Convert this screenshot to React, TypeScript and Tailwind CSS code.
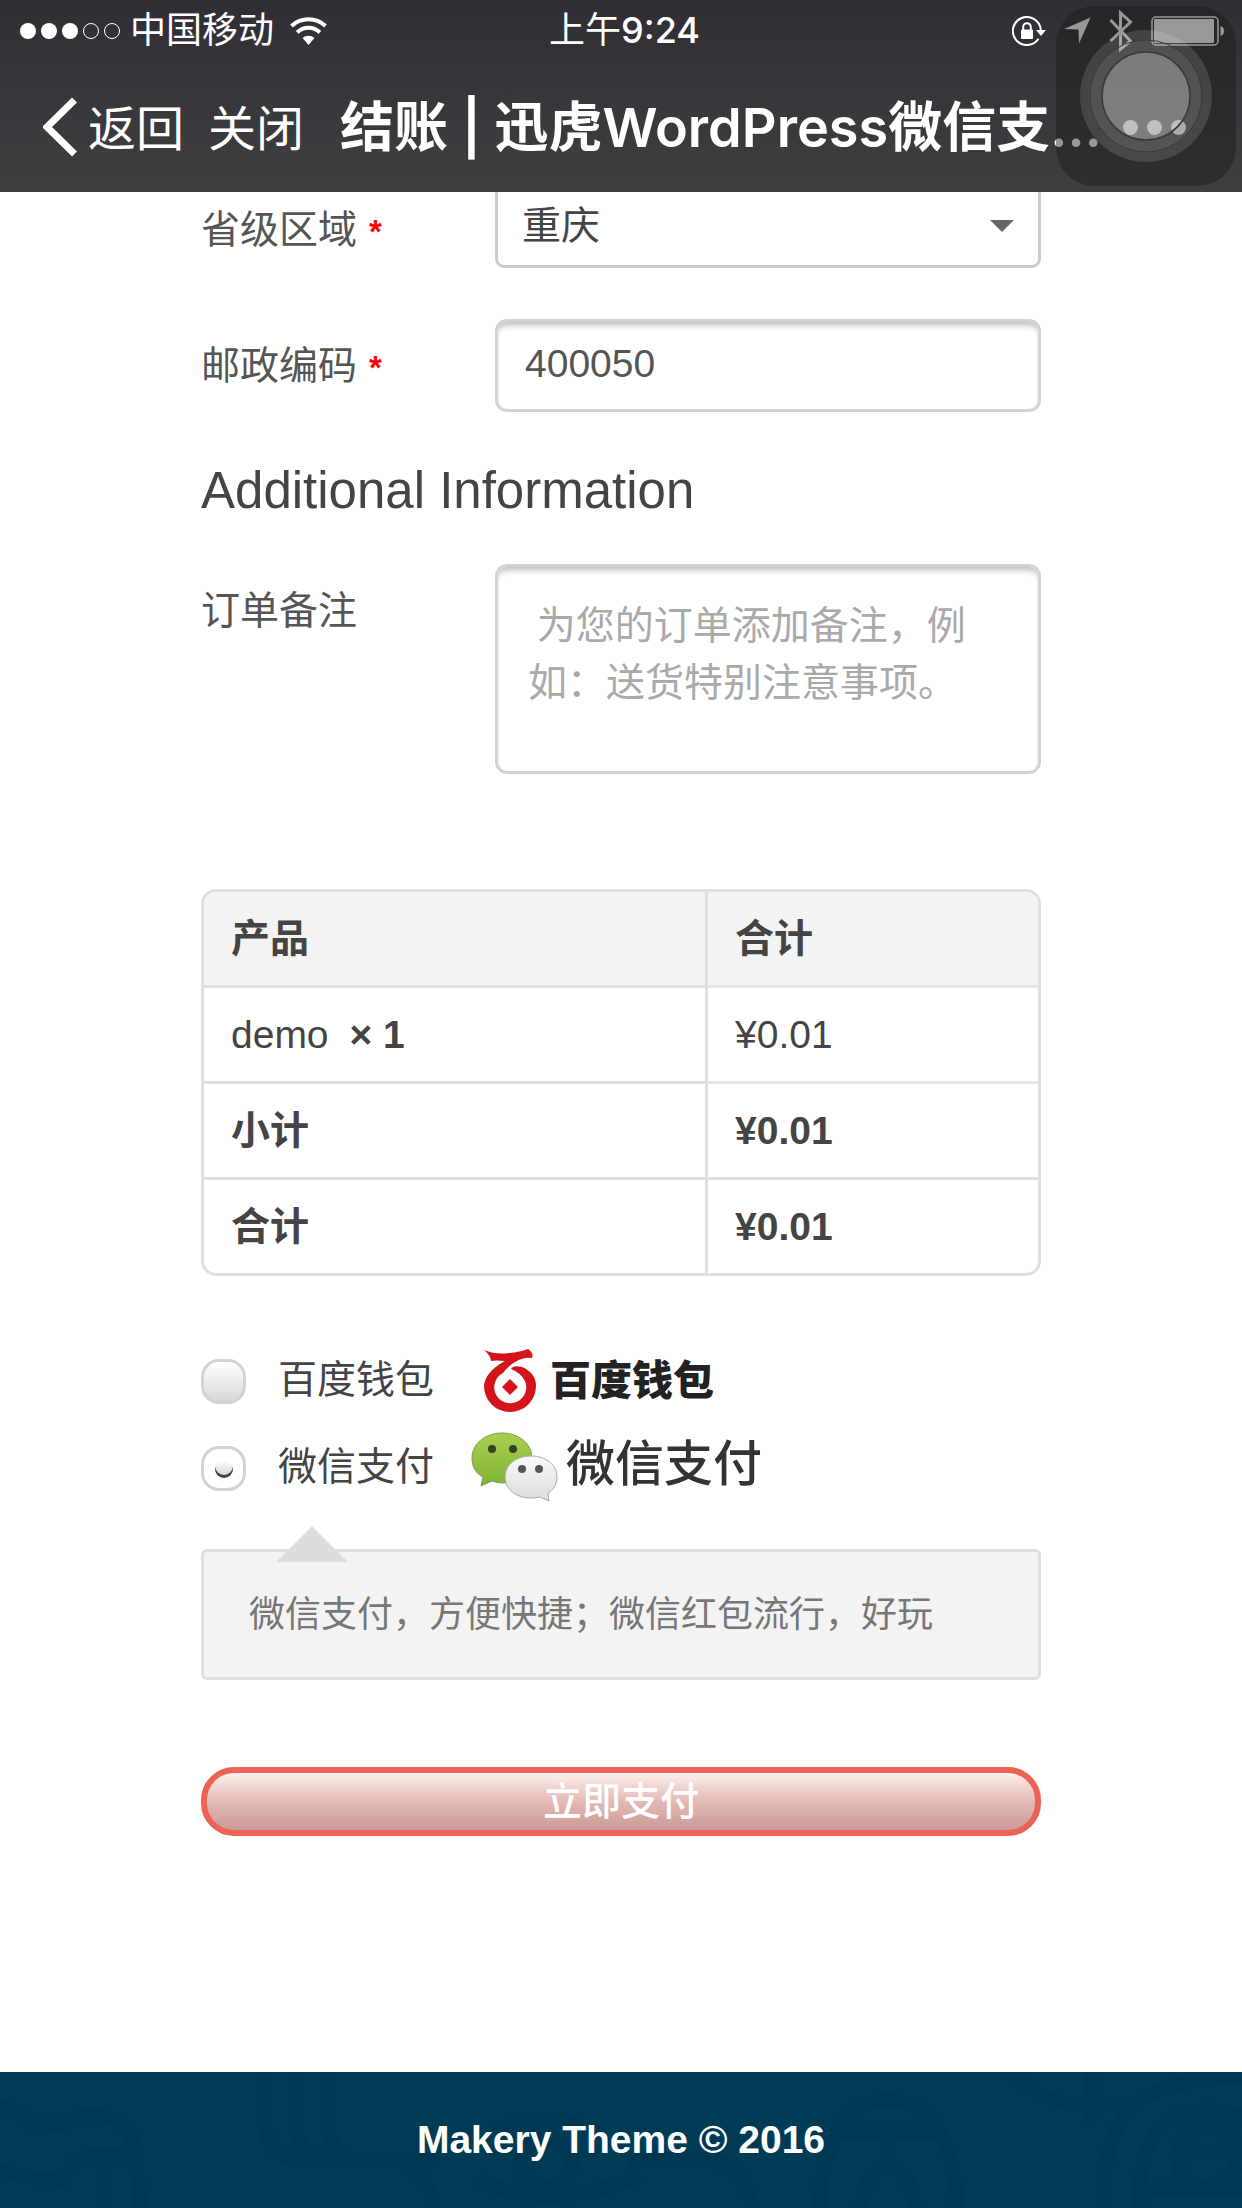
import React from "react";

function SignalDots() {
  return (
    <svg className="h-4 w-[102px]" viewBox="0 0 102 16" aria-label="signal">
      <g fill="#fff">
        <circle cx="8" cy="8" r="8" />
        <circle cx="29" cy="8" r="8" />
        <circle cx="50" cy="8" r="8" />
      </g>
      <g fill="none" stroke="#fff" strokeWidth="1">
        <circle cx="71" cy="8" r="7.5" />
        <circle cx="92" cy="8" r="7.5" />
      </g>
    </svg>
  );
}

function WifiIcon() {
  return (
    <svg className="h-7 w-[37px]" viewBox="0 0 37 28" aria-label="wifi">
      <g fill="none" stroke="#fff" strokeWidth="4">
        <path d="M1.500 9 A25 25 0 0 1 35.500 9" />
        <path d="M7.200 15.500 A16 16 0 0 1 29.800 15.500" />
      </g>
      <path d="M18.500 28 L12.500 21 A9 9 0 0 1 24.500 21 Z" fill="#fff" />
    </svg>
  );
}

function RotationLockIcon() {
  return (
    <svg className="h-[30px] w-[34px]" viewBox="0 0 34 30" aria-label="rotation lock">
      <path d="M28.800 14 A14 14 0 1 0 26.500 22.800" fill="none" stroke="#fff" strokeWidth="2" />
      <path d="M24 14 H34 L29 20 Z" fill="#fff" />
      <rect x="9" y="13.500" width="12" height="9.500" rx="1" fill="#fff" />
      <path d="M11.200 14 V11 A3.800 3.800 0 0 1 18.800 11 V14" fill="none" stroke="#fff" strokeWidth="2" />
    </svg>
  );
}

function LocationIcon() {
  return (
    <svg className="h-[27px] w-[27px]" viewBox="0 0 27 27" aria-label="location">
      <path d="M26.500 0.500 L15 26.500 L14.500 12.500 L0 12 Z" fill="#fff" />
    </svg>
  );
}

function BluetoothIcon() {
  return (
    <svg className="h-[42px] w-6" viewBox="0 0 24 42" aria-label="bluetooth">
      <path d="M1.500 10 L21.500 31 L11.500 39 V3 L21.500 12 L1.500 31" fill="none" stroke="#fff" strokeWidth="3" />
    </svg>
  );
}

function BatteryIcon() {
  return (
    <svg className="h-[30px] w-[74px]" viewBox="0 0 74 30" aria-label="battery">
      <rect x="1" y="1" width="66" height="28" rx="4" fill="none" stroke="#fff" strokeWidth="1.500" />
      <rect x="3" y="3" width="60" height="24" rx="1" fill="#fff" />
      <path d="M69.500 10 Q73 11 73 15 Q73 19 69.500 20 Z" fill="#fff" />
    </svg>
  );
}

function AssistiveTouch() {
  return (
    <div
      className="absolute top-[6px] right-[6px] flex size-[180px] items-center justify-center rounded-[38px] bg-[#1a1a1b]/45"
      aria-label="assistive touch"
    >
      <svg className="size-[132px]" viewBox="0 0 132 132">
        <circle cx="66" cy="66" r="66" fill="#fff" fillOpacity="0.13" />
        <circle cx="66" cy="66" r="56" fill="#fff" fillOpacity="0.07" stroke="#39393a" strokeWidth="1" />
        <circle cx="66" cy="66" r="44" fill="#fff" fillOpacity="0.25" stroke="#39393a" strokeWidth="1.500" />
      </svg>
    </div>
  );
}

function BaiduMark() {
  return (
    <svg className="h-[66px] w-14 shrink-0" viewBox="0 0 56 66" aria-label="百度钱包">
      <path
        d="M2 1 Q14 6 27 4 Q38 3 46 0 Q52 4 50 9 Q42 8 33 13 Q26 17 21 24 A16 16 0 1 0 43 32 Q39 24 29 20 Q31 16 40 18 Q54 24 54 37 A26 26 0 0 1 2 37 Q3 23 23 12 Q14 11 9 12 Q9 7 2 1 Z"
        fill="#d4141a"
      />
      <path d="M28 30 L36 38 L28 46 L20 38 Z" fill="#d4141a" />
    </svg>
  );
}

function WechatMark() {
  return (
    <svg className="h-[72px] w-[90px] shrink-0" viewBox="0 0 90 72" aria-label="微信">
      <defs>
        <linearGradient id="bubble-green" x1="0" y1="0" x2="0" y2="1">
          <stop offset="0" stopColor="#a9cf52" />
          <stop offset="1" stopColor="#80b236" />
        </linearGradient>
        <linearGradient id="bubble-gray" x1="0" y1="0" x2="0" y2="1">
          <stop offset="0" stopColor="#fafafa" />
          <stop offset="1" stopColor="#d9dbdd" />
        </linearGradient>
      </defs>
      <path
        d="M32 2 C49 2 62 13 62 27 C62 42 49 52 32 52 Q27 52 22 50 L11 55 L13 46 C5 42 2 35 2 27 C2 13 15 2 32 2 Z"
        fill="url(#bubble-green)"
        stroke="#7f9f50"
        strokeWidth="1"
      />
      <path
        d="M61 25 C76 25 87 34 87 46 C87 54 83 59 78 62 L79 70 L70 66 Q66 67 61 67 C46 67 35 58 35 46 C35 34 46 25 61 25 Z"
        fill="url(#bubble-gray)"
        stroke="#a8a8a8"
        strokeWidth="1"
      />
      <g fill="#33431f">
        <circle cx="22" cy="18" r="4" />
        <circle cx="43" cy="18" r="4" />
      </g>
      <g fill="#555">
        <circle cx="52" cy="38" r="4" />
        <circle cx="69" cy="38" r="4" />
      </g>
    </svg>
  );
}

function FooterPattern() {
  return (
    <svg className="absolute inset-0 h-full w-full" viewBox="0 0 1242 136" preserveAspectRatio="xMidYMid slice" aria-hidden="true">
      <g fill="none" stroke="#00344f" strokeWidth="14" opacity="0.5">
        <path d="M0 34 Q20 38 36 55 L65 52 Q85 40 99 42 Q130 48 136 80 L140 136" />
        <path d="M0 98 L32 106 L63 108 Q75 82 100 82 H132" />
        <path d="M105 92 V136" />
        <path d="M265 0 V55 Q270 86 300 88 H440" />
        <path d="M296 0 V55 Q298 75 312 84" />
        <path d="M328 0 V55 Q330 75 344 84" />
        <path d="M408 96 Q430 108 434 136" />
        <path d="M495 58 Q546 34 600 62" />
        <ellipse cx="546" cy="91" rx="26" ry="24" />
        <path d="M478 108 Q546 142 640 104" />
        <path d="M629 91 Q680 82 724 92 Q748 104 752 136" />
        <path d="M819 136 Q826 28 888 28 Q950 28 958 136" />
        <path d="M843 61 H938 M888 61 V98" />
        <path d="M860 136 Q868 94 888 94 Q908 94 916 136" />
        <path d="M1009 0 Q1040 28 1068 31 H1136 Q1180 2 1242 6" />
        <path d="M1090 0 V50" />
        <path d="M1104 136 Q1100 62 1136 32" />
        <path d="M1138 136 Q1138 38 1207 38 Q1242 38 1260 60" />
        <circle cx="1207" cy="85" r="30" />
        <path d="M1177 80 H1242 M1145 118 H1242" />
      </g>
    </svg>
  );
}

function Header() {
  return (
    <header className="relative z-10 h-48 bg-linear-to-b from-[#302e34] to-[#3f3f41] text-white">
      <div className="grid h-[61px] grid-cols-[1fr_auto_1fr] items-center pr-[17px] pl-5 font-['Inter','Noto_Sans_CJK_SC',sans-serif] text-[36px] leading-[61px]">
        <div className="flex items-center">
          <SignalDots />
          <span className="mr-4 ml-2">中国移动</span>
          <WifiIcon />
        </div>
        <div className="pl-1">
          上午<span className="font-medium">9:24</span>
        </div>
        <div className="flex items-center justify-end gap-[18px]">
          <RotationLockIcon />
          <LocationIcon />
          <BluetoothIcon />
          <BatteryIcon />
        </div>
      </div>
      <nav className="flex h-[132px] items-center pr-14 pl-[43px] font-['Inter','Noto_Sans_CJK_SC',sans-serif]">
        <button type="button" className="flex items-center gap-[10px] text-[48px] leading-[72px]">
          <svg className="h-[60px] w-[35px]" viewBox="0 0 35 60" aria-hidden="true">
            <path d="M31.500 3 L4 30 L31.500 57" fill="none" stroke="#fff" strokeWidth="7" />
          </svg>
          <span className="pt-[3px]">返回</span>
        </button>
        <button type="button" className="ml-6 pt-[3px] text-[48px] leading-[72px]">
          关闭
        </button>
        <h1 className="ml-9 min-w-0 flex-1 pt-[2px] text-[54px] leading-[72px] font-semibold whitespace-nowrap">
          结账 | 迅虎WordPress微信支…
        </h1>
        <button type="button" aria-label="更多" className="flex gap-[9px]">
          <span className="size-[15px] rounded-full bg-white" />
          <span className="size-[15px] rounded-full bg-white" />
          <span className="size-[15px] rounded-full bg-white" />
        </button>
      </nav>
      <AssistiveTouch />
    </header>
  );
}

function Required() {
  return <span className="ml-3 text-[33px] font-bold text-[#ff0000]">*</span>;
}

const rows = [
  { name: "小计", total: "¥0.01" },
  { name: "合计", total: "¥0.01" },
];

const radioClass =
  "grid size-[45px] shrink-0 appearance-none place-content-center rounded-[18px] border-[3px] border-[#d3d3d3] bg-linear-to-b from-white to-[#d8d8d8] checked:to-white checked:before:size-[18px] checked:before:rounded-full checked:before:bg-linear-to-b checked:before:from-white checked:before:to-[#cfcfcf] checked:before:shadow-[inset_0_-3px_0_#444] checked:before:content-['']";

export default function App() {
  return (
    <div className="flex min-h-screen flex-col bg-white font-['Liberation_Sans','Noto_Sans_CJK_SC',sans-serif] text-[39px] leading-[57px] text-[#444]">
      <Header />
      <main className="-mt-[17px] px-[201px]">
        <form>
          <div className="grid grid-cols-[294px_1fr] items-center">
            <label htmlFor="state" className="pt-[18px] text-[#555]">
              省级区域
              <Required />
            </label>
            <div className="relative">
              <select
                id="state"
                className="block h-[93px] w-full appearance-none rounded-[9px] border-[3px] border-[#ccc] bg-white px-6 pt-2 text-[#444]"
              >
                <option>重庆</option>
              </select>
              <svg className="pointer-events-none absolute top-[45px] right-[27px] h-3 w-6" viewBox="0 0 24 12" aria-hidden="true">
                <path d="M0 0 H24 L12 12 Z" fill="#666" />
              </svg>
            </div>
          </div>

          <div className="mt-[51px] grid grid-cols-[294px_1fr] items-center">
            <label htmlFor="postcode" className="pt-[2px] text-[#555]">
              邮政编码
              <Required />
            </label>
            <input
              id="postcode"
              type="text"
              defaultValue="400050"
              className="h-[93px] w-full rounded-[12px] border-[3px] border-[#d3d3d3] bg-white px-[27px] pb-1 text-[#555] shadow-[inset_0_6px_6px_-3px_#bbb]"
            />
          </div>

          <h2 className="mt-[49px] text-[51px] leading-[60px]">Additional Information</h2>

          <div className="mt-[43px] grid grid-cols-[294px_1fr] items-start">
            <label htmlFor="notes" className="pt-[18px] text-[#555]">
              订单备注
            </label>
            <textarea
              id="notes"
              placeholder=" 为您的订单添加备注，例如：送货特别注意事项。"
              className="block h-[210px] w-full resize-none overflow-hidden rounded-[12px] border-[3px] border-[#d3d3d3] bg-white px-[30px] pt-[27px] font-['Noto_Sans_CJK_SC',sans-serif] shadow-[inset_0_6px_6px_-3px_#bbb] placeholder:text-[#a9a9a9]"
            />
          </div>

          <div className="mt-[115px] overflow-hidden rounded-[15px] border-[3px] border-[#dfdfdf]">
            <table className="w-full table-fixed border-separate border-spacing-0 text-left">
              <thead>
                <tr className="bg-[#f3f3f3]">
                  <th className="h-24 w-[504px] border-r-[3px] border-b-[3px] border-[#dfdfdf] px-[27px] py-0">产品</th>
                  <th className="h-24 border-b-[3px] border-[#e5e5e5] px-[27px] py-0">合计</th>
                </tr>
              </thead>
              <tbody>
                <tr>
                  <td className="h-24 border-r-[3px] border-b-[3px] border-[#dfdfdf] px-[27px] py-0">
                    demo <strong className="ml-[10px]">× 1</strong>
                  </td>
                  <td className="h-24 border-b-[3px] border-[#e5e5e5] px-[27px] py-0">¥0.01</td>
                </tr>
              </tbody>
              <tfoot>
                {rows.map((row, i) => (
                  <tr key={row.name} className={i === 0 ? "h-24 *:border-b-[3px]" : "h-[93px]"}>
                    <th className="border-r-[3px] border-[#dfdfdf] px-[27px] py-0">{row.name}</th>
                    <td className="border-[#dfdfdf] px-[27px] py-0 font-bold">{row.total}</td>
                  </tr>
                ))}
              </tfoot>
            </table>
          </div>

          <div className="mt-[62px]">
            <div className="flex h-[87px] items-center">
              <input id="baidu" type="radio" name="payment" className={radioClass} />
              <label htmlFor="baidu" className="ml-8 flex items-center">
                <span className="pb-1">百度钱包</span>
                <span className="ml-12 flex items-center gap-3 text-[41px] font-black text-[#222]">
                  <BaiduMark />
                  <span>百度钱包</span>
                </span>
              </label>
            </div>
            <div className="flex h-[87px] items-center">
              <input id="wechat" type="radio" name="payment" defaultChecked className={radioClass} />
              <label htmlFor="wechat" className="ml-8 flex items-center">
                <span className="pb-1">微信支付</span>
                <span className="ml-9 flex items-center gap-[6px] pb-1 text-[49px] font-medium text-[#333]">
                  <WechatMark />
                  <span className="pb-1">微信支付</span>
                </span>
              </label>
            </div>
          </div>

          <div className="relative mt-[37px] rounded-[6px] border-[3px] border-[#dfdfdf] bg-[#f3f3f3] px-[45px] py-[34px] text-[36px] text-[#777]">
            <svg className="absolute -top-[26px] left-[72px] h-9 w-[72px]" viewBox="0 0 72 36" aria-hidden="true">
              <path d="M36 0 L72 36 H0 Z" fill="#dfdcde" />
            </svg>
            <p>微信支付，方便快捷；微信红包流行，好玩</p>
          </div>

          <button
            type="submit"
            className="mt-[87px] flex h-[69px] w-full items-center justify-center rounded-[33px] border-[6px] border-[#ec6355] bg-linear-to-b from-[#fdf0ee] via-[#e3b9b5] to-[#cb9a96] font-medium text-white"
          >
            立即支付
          </button>
        </form>
      </main>

      <footer className="relative mt-auto flex h-[136px] items-center justify-center bg-[#003b56] font-bold text-white">
        <FooterPattern />
        <p className="relative pb-[2px]">Makery Theme © 2016</p>
      </footer>
    </div>
  );
}
